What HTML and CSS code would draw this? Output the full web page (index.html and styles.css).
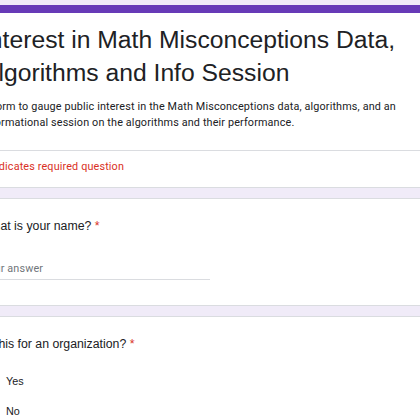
FILE: index.html
```html
<!DOCTYPE html>
<html lang="en">
<head>
<meta charset="utf-8">
<title>Interest in Math Misconceptions Data, Algorithms and Info Session</title>
<link rel="stylesheet" href="styles.css">
</head>
<body>
<main class="form">
  <section class="card header-card">
    <div class="accent"></div>
    <div class="header-main">
      <h1 class="title">Interest in Math Misconceptions Data, Algorithms and Info Session</h1>
      <p class="desc">A form to gauge public interest in the Math Misconceptions data, algorithms, and an informational session on the algorithms and their performance.</p>
    </div>
    <div class="required-note">* Indicates required question</div>
  </section>

  <section class="card question">
    <div class="q-title">What is your name? <span class="star">*</span></div>
    <div class="answer"><span class="placeholder">Your answer</span></div>
  </section>

  <section class="card question">
    <div class="q-title">Is this for an organization? <span class="star">*</span></div>
    <div class="options">
      <label class="option"><span class="radio"></span><span class="opt-label">Yes</span></label>
      <label class="option"><span class="radio"></span><span class="opt-label">No</span></label>
    </div>
  </section>
</main>
</body>
</html>
```

FILE: styles.css
```css
html, body {
  margin: 0;
  padding: 0;
  overflow: hidden;
  background: #f0ebf8;
}

.form {
  margin-left: -37.5px;
  width: 493px;
  padding-top: 5px;
  display: flex;
  flex-direction: column;
  gap: 10px;
}

.card {
  background: #ffffff;
  border: 1px solid #dadce0;
  border-radius: 6px;
}

.header-card {
  border-top: none;
  overflow: hidden;
}

.accent {
  height: 8px;
  background: #673ab7;
}

.header-main {
  padding: 10px 18.5px 19.5px 18.5px;
  border-bottom: 1px solid #dadce0;
}

.title {
  margin: 0;
  font-family: "Liberation Sans", Arial, sans-serif;
  font-weight: 400;
  font-size: 24.7px;
  line-height: 33px;
  color: #202124;
}

.desc {
  margin: 10.3px 0 0 0;
  font-family: Roboto, "Liberation Sans", sans-serif;
  font-size: 10.8px;
  line-height: 15.4px;
  letter-spacing: 0.15px;
  color: #202124;
}

.required-note {
  padding: 8.6px 18.5px 12.5px 18.5px;
  font-family: Roboto, "Liberation Sans", sans-serif;
  font-size: 10.8px;
  line-height: 15.4px;
  letter-spacing: 0.15px;
  color: #d93025;
}

.question {
  padding: 18px 18.5px 25px 18.5px;
}

.q-title {
  font-family: "Liberation Sans", Arial, sans-serif;
  font-size: 12.3px;
  line-height: 18.5px;
  color: #202124;
}

.star {
  color: #d93025;
}

.answer {
  margin-top: 25px;
  width: 228px;
  padding-bottom: 3px;
  border-bottom: 1px solid #dadce0;
}

.placeholder {
  display: block;
  font-family: Roboto, "Liberation Sans", sans-serif;
  font-size: 10.8px;
  line-height: 15.4px;
  letter-spacing: 0.15px;
  color: #70757a;
}

.options {
  margin-top: 13px;
  display: flex;
  flex-direction: column;
}

.option {
  height: 30px;
  display: flex;
  align-items: center;
  gap: 9.6px;
}

.radio {
  width: 12.4px;
  height: 12.4px;
  border: 1.5px solid #5f6368;
  border-radius: 50%;
  flex: none;
}

.opt-label {
  font-family: "Liberation Sans", Arial, sans-serif;
  font-size: 10.8px;
  line-height: 15.4px;
  color: #202124;
}
```
